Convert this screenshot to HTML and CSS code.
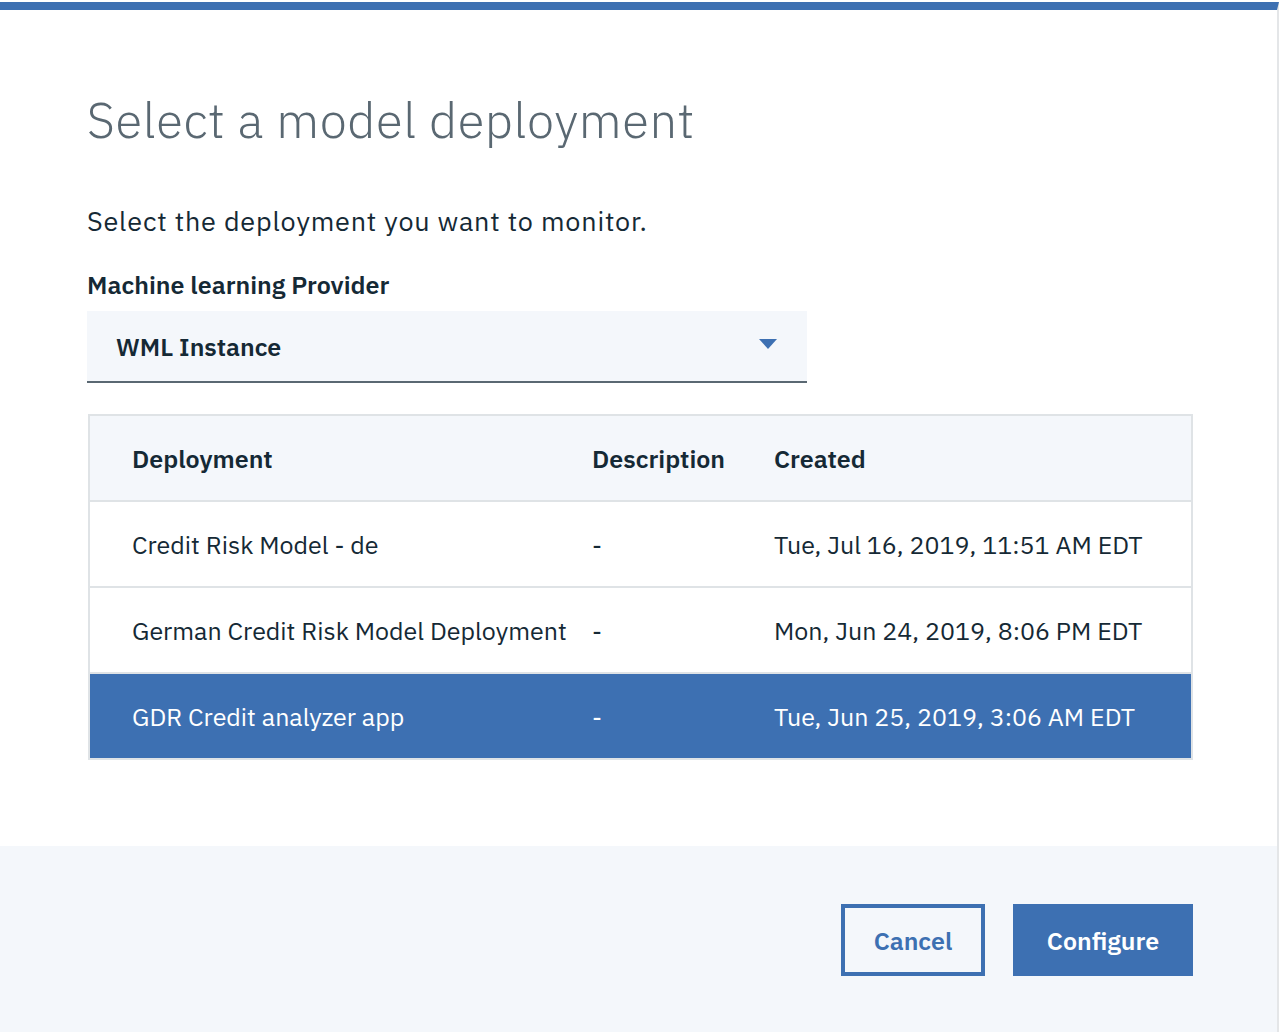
FILE: index.html
```html
<!DOCTYPE html>
<html lang="en">
<head>
<meta charset="utf-8">
<title>Select a model deployment</title>
<link rel="stylesheet" href="styles.css">
</head>
<body>
<div class="modal">
  <div class="modal-body">
    <h1 class="title">Select a model deployment</h1>
    <p class="lead">Select the deployment you want to monitor.</p>
    <label class="field-label">Machine learning Provider</label>
    <div class="dropdown">
      <span class="dropdown-value">WML Instance</span>
      <svg class="caret" width="18" height="10" viewBox="0 0 18 10"><path d="M0 0h18L9 10z" fill="#3d70b2"/></svg>
    </div>
    <div class="table">
      <div class="row head">
        <div class="cell">Deployment</div>
        <div class="cell">Description</div>
        <div class="cell">Created</div>
      </div>
      <div class="row">
        <div class="cell">Credit Risk Model - de</div>
        <div class="cell">-</div>
        <div class="cell">Tue, Jul 16, 2019, 11:51 AM EDT</div>
      </div>
      <div class="row">
        <div class="cell">German Credit Risk Model Deployment</div>
        <div class="cell">-</div>
        <div class="cell">Mon, Jun 24, 2019, 8:06 PM EDT</div>
      </div>
      <div class="row selected">
        <div class="cell">GDR Credit analyzer app</div>
        <div class="cell">-</div>
        <div class="cell">Tue, Jun 25, 2019, 3:06 AM EDT</div>
      </div>
    </div>
  </div>
  <div class="modal-footer">
    <button class="btn btn-secondary">Cancel</button>
    <button class="btn btn-primary">Configure</button>
  </div>
</div>
</body>
</html>
```

FILE: styles.css
```css
html, body {
  margin: 0;
  padding: 0;
  background: #ffffff;
}
body {
  font-family: "IBM Plex Sans", Roboto, "Liberation Sans", sans-serif;
  color: #152935;
  padding-top: 2px;
}
.modal {
  width: 1279px;
  height: 1030px;
  box-sizing: border-box;
  border-top: 8px solid #3d70b2;
  border-right: 2px solid #e4e6e8;
  display: flex;
  flex-direction: column;
  background: #ffffff;
}
.modal-body {
  flex: 1;
  padding: 0 84px 0 87px;
  display: flex;
  flex-direction: column;
}
.title {
  margin: 80px 0 0;
  font-weight: 300;
  font-size: 49px;
  line-height: 60px;
  color: #5a6872;
  letter-spacing: 0.6px;
}
.lead {
  margin: 55px 0 0;
  font-size: 27px;
  line-height: 32px;
  font-weight: 400;
  letter-spacing: 0.8px;
}
.field-label {
  margin-top: 33px;
  font-size: 25px;
  line-height: 30px;
  font-weight: 600;
}
.dropdown {
  margin-top: 11px;
  width: 720px;
  height: 72px;
  box-sizing: border-box;
  background: #f4f7fb;
  border-bottom: 2px solid #5a6872;
  display: flex;
  align-items: center;
  justify-content: space-between;
  padding: 0 30px 0 29px;
}
.dropdown-value {
  font-size: 25px;
  font-weight: 600;
}
.caret {
  margin-bottom: 4px;
}
.table {
  margin-top: 31px;
  margin-left: 1px;
  border: 2px solid #dfe3e6;
  display: flex;
  flex-direction: column;
}
.row {
  display: grid;
  grid-template-columns: 460px 182px 1fr;
  padding-left: 42px;
  height: 84px;
  align-items: center;
  border-top: 2px solid #dfe3e6;
  font-size: 25px;
  background: #ffffff;
}
.row.head {
  border-top: none;
  background: #f4f7fb;
  font-weight: 600;
}
.row.selected {
  background: #3d70b2;
  color: #ffffff;
}
.modal-footer {
  height: 186px;
  flex: none;
  background: #f4f7fb;
  display: flex;
  justify-content: flex-end;
  align-items: flex-start;
  gap: 28px;
  padding: 58px 84px 0 0;
  box-sizing: border-box;
}
.btn {
  height: 72px;
  font-family: inherit;
  font-size: 25px;
  font-weight: 600;
  cursor: pointer;
}
.btn-secondary {
  width: 144px;
  background: transparent;
  border: 4px solid #3d70b2;
  color: #3d70b2;
}
.btn-primary {
  width: 180px;
  background: #3d70b2;
  border: none;
  color: #ffffff;
}
```
